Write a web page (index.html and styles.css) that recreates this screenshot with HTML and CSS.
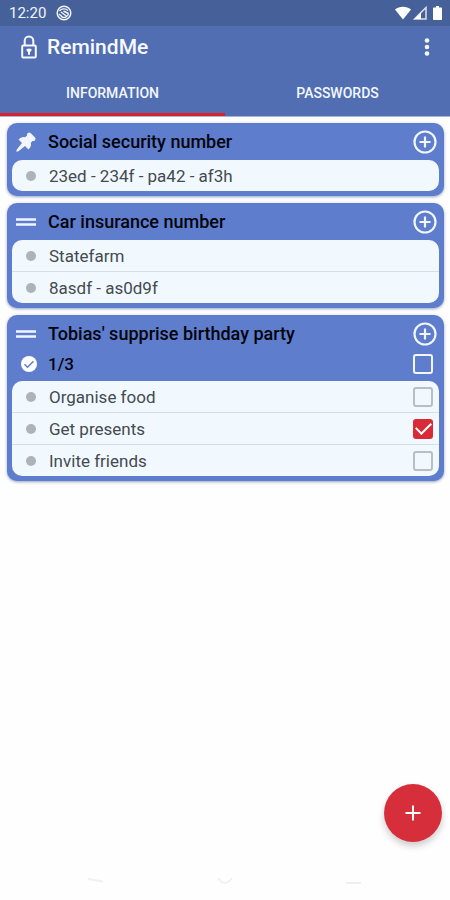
FILE: index.html
```html
<!DOCTYPE html>
<html lang="en">
<head>
<meta charset="utf-8">
<meta name="viewport" content="width=device-width, initial-scale=1">
<title>RemindMe</title>
<link rel="stylesheet" href="styles.css">
</head>
<body>
<svg class="defs" aria-hidden="true">
  <symbol id="add" viewBox="0 0 24 24"><circle cx="12" cy="12" r="10.5" fill="none" stroke="currentColor" stroke-width="2.200"/><path d="M12 6.500v11M6.500 12h11" stroke="currentColor" stroke-width="2.200"/></symbol>
  <symbol id="handle" viewBox="0 0 20 10"><path d="M0 2.500h20M0 7.500h20" stroke="currentColor" stroke-width="2.600"/></symbol>
</svg>
<div class="screen">
  <div class="status-bar">
    <span class="clock">12:20</span>
    <svg class="status-app" viewBox="0 0 16 16" fill="none" stroke="currentColor" aria-hidden="true"><circle cx="8" cy="8" r="6.800" stroke-width="1.500"/><path d="M3.500 6.200C5 3.500 9.500 3 12 5.500M12.500 8.500C12 12 8 13.500 5 11.500M3 9l4 3.500M5 7l6 4.500M7.500 6l5 2.500" stroke-width="1.400"/></svg>
    <div class="status-icons">
      <svg width="16" height="14" viewBox="0 0 16 14" aria-hidden="true"><path d="M0 3.500C4.500-.3 11.500-.3 16 3.500L8 13.500z" fill="currentColor"/></svg>
      <svg width="14" height="14" viewBox="0 0 14 14" aria-hidden="true"><path d="M13 1.500v11.500H1.500z" fill="none" stroke="currentColor" stroke-width="1.500" opacity=".8"/><path d="M8 6.500v6.500H1.500z" fill="currentColor"/></svg>
      <svg class="battery" width="9" height="14" viewBox="0 0 9 14" aria-hidden="true"><path d="M3 0h3v1.500h2.300q.7 0 .7.700v11.100q0 .7-.7.700H.7q-.7 0-.7-.7V2.200q0-.7.7-.7H3z" fill="currentColor"/></svg>
    </div>
  </div>
  <header class="app-bar">
    <svg class="lock" viewBox="0 0 18 24" fill="none" stroke="currentColor" aria-hidden="true"><rect x="2.200" y="10.500" width="13.600" height="12" rx="1" stroke-width="2"/><path d="M4.700 10V5.700a4.300 4.300 0 0 1 8.600 0V10" stroke-width="2"/><path d="M6.300 14.300q2.700-1.800 5.400 0q0 2-1.700 2.700v2.700H8V17q-1.700-.7-1.700-2.700z" fill="currentColor" stroke="none"/></svg>
    <h1>RemindMe</h1>
    <button class="menu" aria-label="More options"><svg width="6" height="18" viewBox="0 0 6 18" fill="currentColor"><circle cx="3" cy="2.500" r="2.300"/><circle cx="3" cy="9" r="2.300"/><circle cx="3" cy="15.500" r="2.300"/></svg></button>
  </header>
  <nav class="tabs">
    <a class="tab active" href="#information">INFORMATION</a>
    <a class="tab" href="#passwords">PASSWORDS</a>
  </nav>
  <main class="cards" id="information">
    <section class="card">
      <div class="card-head">
        <svg class="lead" viewBox="0 0 20 20" aria-hidden="true"><path d="M11.600 1.200q1.600-1.500 3.200 0l4 4q1.500 1.600 0 3.200-1 .9-2.300.5L14.800 10.800q1 4-2.300 6.700L9 14 2.500 19.200.3 19.700.8 17.500 6 11 2.500 7.500q2.700-3.300 6.700-2.300L11.100 3.500q-.4-1.300.5-2.300z" fill="currentColor"/></svg>
        <h2>Social security number</h2>
        <button class="add" aria-label="Add to Social security number"><svg><use href="#add"/></svg></button>
      </div>
      <ul class="items"><li><span class="text">23ed - 234f - pa42 - af3h</span></li></ul>
    </section>
    <section class="card">
      <div class="card-head">
        <svg class="lead handle"><use href="#handle"/></svg>
        <h2>Car insurance number</h2>
        <button class="add" aria-label="Add to Car insurance number"><svg><use href="#add"/></svg></button>
      </div>
      <ul class="items">
        <li><span class="text">Statefarm</span></li>
        <li><span class="text">8asdf - as0d9f</span></li>
      </ul>
    </section>
    <section class="card">
      <div class="card-head">
        <svg class="lead handle"><use href="#handle"/></svg>
        <h2>Tobias' supprise birthday party</h2>
        <button class="add" aria-label="Add to Tobias' supprise birthday party"><svg><use href="#add"/></svg></button>
      </div>
      <div class="progress">
        <svg class="done" viewBox="0 0 16 16" aria-hidden="true"><circle cx="8" cy="8" r="8" fill="currentColor"/><path d="M3.500 8.200l3 3 6-6" fill="none" stroke="#5f7dcd" stroke-width="1.500"/></svg>
        <label for="all">1/3</label>
        <input class="light" type="checkbox" id="all">
      </div>
      <ul class="items">
        <li><label class="text" for="food">Organise food</label><input type="checkbox" id="food"></li>
        <li><label class="text" for="presents">Get presents</label><input type="checkbox" id="presents" checked></li>
        <li><label class="text" for="friends">Invite friends</label><input type="checkbox" id="friends"></li>
      </ul>
    </section>
  </main>
  <div class="fab-row">
    <button class="fab" aria-label="New list"><svg width="16" height="16" viewBox="0 0 16 16" aria-hidden="true"><path d="M8 .5v15M.5 8h15" stroke="currentColor" stroke-width="2"/></svg></button>
  </div>
  <footer class="system-nav" aria-hidden="true">
    <svg viewBox="0 0 18 8"><path d="M1 2l15 2.500"/></svg>
    <svg viewBox="0 0 18 8"><path d="M2 1q7 10 14 0"/></svg>
    <svg viewBox="0 0 18 8"><path d="M1 6h15"/></svg>
  </footer>
</div>
</body>
</html>
```
FILE: styles.css
```css
* { box-sizing: border-box; }
body { margin: 0; background: #fefefe; color: #000; font-family: Roboto, "Liberation Sans", sans-serif; }
h1, h2, ul { margin: 0; padding: 0; }
svg { display: block; flex: none; }
button { display: grid; place-items: center; padding: 0; border: 0; background: none; color: inherit; }
.defs { position: absolute; width: 0; height: 0; }
.screen { display: flex; flex-direction: column; min-height: 100vh; }

.status-bar { display: flex; align-items: center; height: 26px; padding: 0 8px 0 9px; background: #466199; color: #f1f4fb; font-size: 15px; }
.status-app { width: 16px; height: 16px; margin-left: 10px; }
.status-icons { display: flex; align-items: center; gap: 2px; margin-left: auto; color: #fff; }
.battery { margin-left: 4px; }

.app-bar { display: flex; align-items: center; height: 42px; padding: 0 20px; background: #506eb1; color: #f7f9ff; }
.lock { width: 18px; height: 24px; }
h1 { flex: 1; margin-left: 9px; font-size: 21px; font-weight: 500; }
.menu { width: 6px; height: 24px; }

.tabs { display: flex; height: 49px; background: #506eb1; border-bottom: 1px solid #a7b4d3; }
.tab { flex: 1; display: grid; place-items: center; padding-top: 4px; border-bottom: 3px solid transparent; color: #f4f7ff; font-size: 14px; font-weight: 500; text-decoration: none; }
.tab.active { border-color: #da1f2d; }

.cards { display: flex; flex-direction: column; gap: 7px; padding: 6px 6px 0 7px; }
.card { padding: 0 5px 5px; border-radius: 10px; background: #5f7dcd; box-shadow: 0 1px 3px rgba(50, 70, 130, .5); }
.card-head { display: flex; align-items: center; height: 37px; padding: 0 2px 0 4px; color: #f1f6ff; }
.lead { width: 20px; height: 20px; }
.handle { height: 10px; }
h2 { flex: 1; margin-left: 12px; color: #02040c; font-size: 18px; font-weight: 500; }
.add svg { width: 24px; height: 24px; }
.progress { display: flex; align-items: center; height: 29px; padding: 0 6px 5px 9px; color: #fff; }
.done { width: 16px; height: 16px; }
.progress label { flex: 1; margin-left: 11px; color: #02040c; font-size: 17px; font-weight: 500; }

.items { overflow: hidden; border-radius: 10px; background: #f1f9ff; list-style: none; }
.items li { display: flex; align-items: center; height: 32px; padding: 0 6px 0 14px; border-bottom: 1px solid #d5dfe8; }
.items li:last-child { height: 31px; border-bottom: 0; }
.items li::before { content: ""; width: 10px; height: 10px; border-radius: 50%; background: #adb3b7; }
.text { flex: 1; margin-left: 13px; color: #454a4f; font-size: 17px; }

input { appearance: none; display: grid; place-items: center; width: 20px; height: 20px; margin: 0; border: 2px solid #b9bec2; border-radius: 3px; }
input.light { border-color: #f1f6ff; }
input:checked { border-color: #d92b37; background: #d92b37; }
input:checked::after { content: ""; width: 13px; height: 7px; margin-bottom: 4px; border: solid #fff; border-width: 0 0 2px 2px; transform: rotate(-45deg); }

.fab-row { display: flex; justify-content: flex-end; margin-top: auto; padding: 0 8px 32px; }
.fab { width: 58px; height: 58px; border-radius: 50%; background: #d62f3b; color: #fff; box-shadow: 0 4px 7px rgba(0, 0, 0, .2); }
.system-nav { display: flex; justify-content: space-around; height: 26px; padding: 3px 31px; }
.system-nav svg { width: 18px; height: 8px; fill: none; stroke: #f0f0f0; stroke-width: 2; }
```
